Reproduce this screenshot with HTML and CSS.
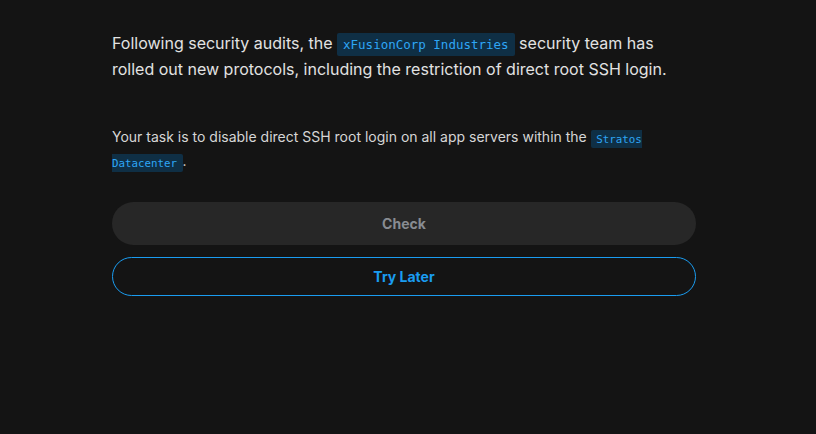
FILE: index.html
```html
<!DOCTYPE html>
<html>
<head>
<meta charset="utf-8">
<link rel="stylesheet" href="styles.css">
</head>
<body>
<main class="panel">
  <p class="intro">Following security audits, the <code class="chip chip-lg">xFusionCorp Industries</code> security team has rolled out new protocols, including the restriction of direct root SSH login.</p>
  <p class="task">Your task is to disable direct SSH root login on all app servers within the <code class="chip chip-sm">Stratos Datacenter</code>.</p>
  <div class="actions">
    <button class="btn btn-check">Check</button>
    <button class="btn btn-later">Try Later</button>
  </div>
</main>
</body>
</html>
```
FILE: styles.css
```css
html, body {
  margin: 0;
  padding: 0;
  background: #141414;
}
body {
  font-family: Inter, "Noto Sans", sans-serif;
  height: 434px;
  overflow: hidden;
}
.panel {
  width: 584px;
  margin-left: 112px;
  padding-top: 31px;
}
.intro {
  margin: 0;
  font-size: 16px;
  line-height: 25px;
  color: #e2e2e2;
}
.task {
  margin: 44px 0 0;
  font-size: 14px;
  line-height: 22px;
  color: #d6d6d6;
}
.chip {
  font-family: "DejaVu Sans Mono", monospace;
  background: #0f2f45;
  color: #2ea6f5;
  border-radius: 2px;
}
.chip-lg {
  font-size: 12.5px;
  padding: 4px 6px;
}
.chip-sm {
  font-size: 10.8px;
  padding: 2.5px 5.5px;
}
.actions {
  display: flex;
  flex-direction: column;
  gap: 12px;
  margin-top: 28px;
}
.btn {
  font-family: Inter, "Noto Sans", sans-serif;
  font-size: 14px;
  font-weight: 700;
  border-radius: 999px;
  width: 100%;
  cursor: pointer;
}
.btn-check {
  height: 43px;
  background: #272727;
  border: none;
  color: #888c92;
}
.btn-later {
  height: 39px;
  background: transparent;
  border: 1px solid #1a9cf0;
  color: #1a9cf0;
}
```
